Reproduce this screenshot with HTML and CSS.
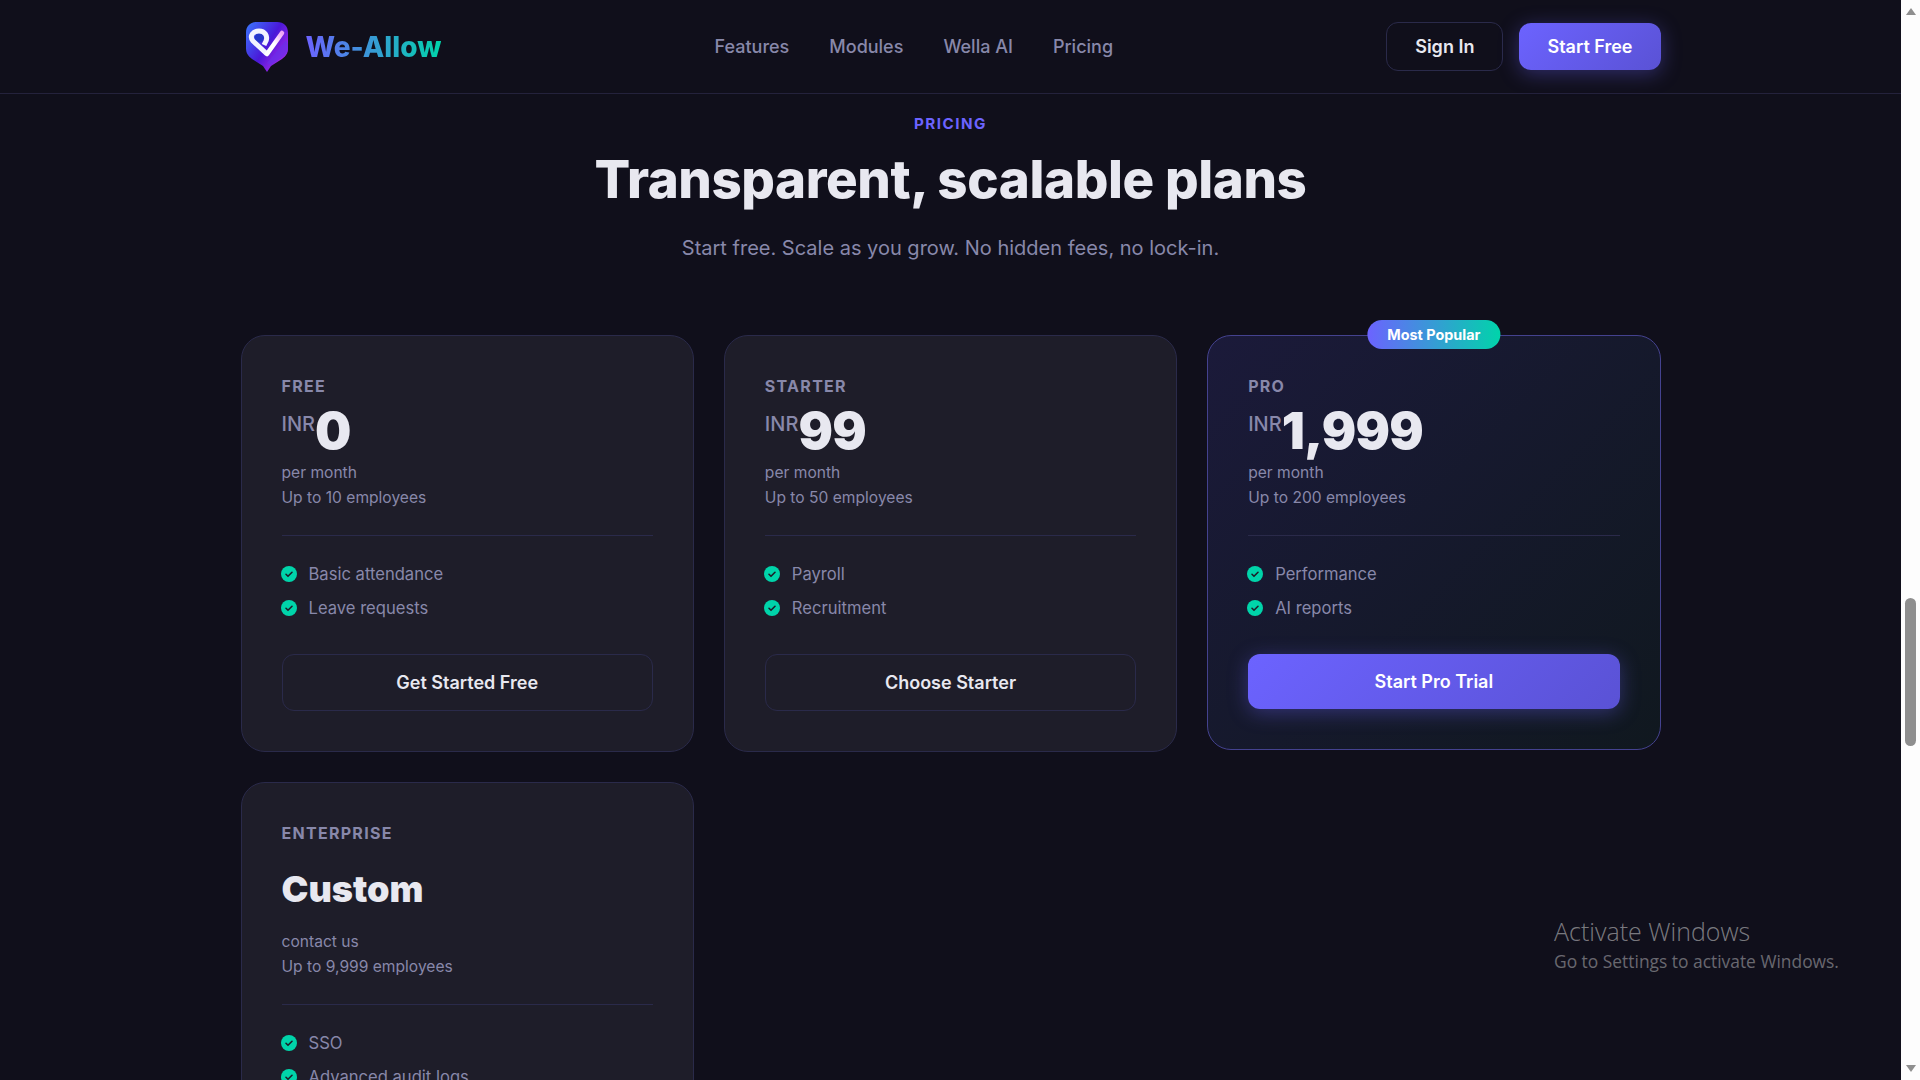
FILE: index.html
```html
<!DOCTYPE html>
<html lang="en">
<head>
    <meta charset="UTF-8">
    <meta name="viewport" content="width=device-width, initial-scale=1.0">
    <title>We-Allow - Pricing</title>
    <link rel="stylesheet" href="styles.css">
</head>
<body>
    <div class="page">
        <header class="navbar">
            <div class="nav-inner">
                <a href="#" class="brand">
                    <svg class="brand-icon" viewBox="0 0 44 52" width="44" height="52">
                        <defs>
                            <linearGradient id="shieldFill" x1="0" y1="0" x2="1" y2="0.75">
                                <stop offset="0" stop-color="#3a78ff"/>
                                <stop offset="0.55" stop-color="#4a18d8"/>
                                <stop offset="1" stop-color="#b82cec"/>
                            </linearGradient>
                            <linearGradient id="armFill" x1="0" y1="1" x2="1" y2="0">
                                <stop offset="0" stop-color="#ffffff"/>
                                <stop offset="0.5" stop-color="#ffffff"/>
                                <stop offset="1" stop-color="#f0a4f6"/>
                            </linearGradient>
                        </defs>
                        <path d="M12 1H32C39 1 43 5 43 12V27C43 32 41 35 37 38L26 45L22 51L18 45L7 38C3 35 1 32 1 27V12C1 5 5 1 12 1Z" fill="url(#shieldFill)"/>
                        <path d="M22 42L41 19L43 23V27C43 31 41 34 38 36L26 44Z" fill="#6a2ee8" opacity="0.75"/>
                        <circle cx="14.3" cy="16.7" r="4.5" fill="#2438c8"/>
                        <path d="M22 33L8 20C4 15 8 10 14 10C20 10 23 15 21 20L19 24" fill="none" stroke="#f2f4ff" stroke-width="5" stroke-linejoin="round"/>
                        <path d="M22 33L37 12" fill="none" stroke="url(#armFill)" stroke-width="4.6" stroke-linecap="round"/>
                    </svg>
                    <span class="brand-name">We-Allow</span>
                </a>
                <nav class="nav-links">
                    <a href="#">Features</a>
                    <a href="#">Modules</a>
                    <a href="#">Wella AI</a>
                    <a href="#">Pricing</a>
                </nav>
                <div class="nav-actions">
                    <button class="btn-ghost nav-btn">Sign In</button>
                    <button class="btn-primary nav-btn">Start Free</button>
                </div>
            </div>
        </header>

        <section class="pricing">
            <div class="section-head">
                <div class="section-tag">PRICING</div>
                <h2 class="section-title">Transparent, scalable plans</h2>
                <p class="section-sub">Start free. Scale as you grow. No hidden fees, no lock-in.</p>
            </div>

            <div class="plans">
                <div class="plan">
                    <div class="plan-name">FREE</div>
                    <div class="plan-price"><span class="currency">INR</span>0</div>
                    <div class="plan-note">per month<br>Up to 10 employees</div>
                    <ul class="plan-features">
                        <li><svg class="check" viewBox="0 0 16 16"><circle cx="8" cy="8" r="8"/><path d="M5 8.3l2 2 4-4"/></svg>Basic attendance</li>
                        <li><svg class="check" viewBox="0 0 16 16"><circle cx="8" cy="8" r="8"/><path d="M5 8.3l2 2 4-4"/></svg>Leave requests</li>
                    </ul>
                    <button class="btn-ghost plan-btn">Get Started Free</button>
                </div>

                <div class="plan">
                    <div class="plan-name">STARTER</div>
                    <div class="plan-price"><span class="currency">INR</span>99</div>
                    <div class="plan-note">per month<br>Up to 50 employees</div>
                    <ul class="plan-features">
                        <li><svg class="check" viewBox="0 0 16 16"><circle cx="8" cy="8" r="8"/><path d="M5 8.3l2 2 4-4"/></svg>Payroll</li>
                        <li><svg class="check" viewBox="0 0 16 16"><circle cx="8" cy="8" r="8"/><path d="M5 8.3l2 2 4-4"/></svg>Recruitment</li>
                    </ul>
                    <button class="btn-ghost plan-btn">Choose Starter</button>
                </div>

                <div class="plan plan-pro">
                    <div class="plan-badge">Most Popular</div>
                    <div class="plan-name">PRO</div>
                    <div class="plan-price"><span class="currency">INR</span>1,999</div>
                    <div class="plan-note">per month<br>Up to 200 employees</div>
                    <ul class="plan-features">
                        <li><svg class="check" viewBox="0 0 16 16"><circle cx="8" cy="8" r="8"/><path d="M5 8.3l2 2 4-4"/></svg>Performance</li>
                        <li><svg class="check" viewBox="0 0 16 16"><circle cx="8" cy="8" r="8"/><path d="M5 8.3l2 2 4-4"/></svg>AI reports</li>
                    </ul>
                    <button class="btn-primary plan-btn">Start Pro Trial</button>
                </div>

                <div class="plan">
                    <div class="plan-name">ENTERPRISE</div>
                    <div class="plan-price plan-custom">Custom</div>
                    <div class="plan-note">contact us<br>Up to 9,999 employees</div>
                    <ul class="plan-features">
                        <li><svg class="check" viewBox="0 0 16 16"><circle cx="8" cy="8" r="8"/><path d="M5 8.3l2 2 4-4"/></svg>SSO</li>
                        <li><svg class="check" viewBox="0 0 16 16"><circle cx="8" cy="8" r="8"/><path d="M5 8.3l2 2 4-4"/></svg>Advanced audit logs</li>
                    </ul>
                </div>
            </div>
        </section>

        <!-- Windows watermark sits over the page -->
        <div class="watermark">
            <div class="watermark-title">Activate Windows</div>
            <div class="watermark-sub">Go to Settings to activate Windows.</div>
        </div>
    </div>

    <div class="scrollbar">
        <div class="arrow-up"></div>
        <div class="thumb"></div>
        <div class="arrow-down"></div>
    </div>
</body>
</html>
```

FILE: styles.css
```css
* {
    box-sizing: border-box;
    margin: 0;
    padding: 0;
    font-family: 'Inter', sans-serif;
}

body {
    display: flex;
    height: 100vh;
    overflow: hidden;
    background-color: #100f1b;
    color: #e8e8f0;
}

.page {
    position: relative;
    flex: 1;
    min-width: 0;
    overflow: hidden;
}

/* Navbar */
.navbar {
    height: 94px;
    border-bottom: 1px solid #24223c;
}

.nav-inner {
    display: flex;
    align-items: center;
    justify-content: space-between;
    width: 1420px;
    height: 93px;
    margin: 0 auto;
}

.brand {
    display: flex;
    align-items: center;
    gap: 17px;
    padding-left: 4px;
    text-decoration: none;
}

.brand-icon {
    display: block;
}

.brand-name {
    font-size: 28px;
    font-weight: 800;
    background: linear-gradient(90deg, #6c63ff, #00d4aa);
    -webkit-background-clip: text;
    background-clip: text;
    color: transparent;
}

.nav-links {
    display: flex;
    gap: 40px;
}

.nav-links a {
    font-size: 18px;
    font-weight: 500;
    color: #8888aa;
    text-decoration: none;
}

.nav-actions {
    display: flex;
    align-items: center;
    gap: 16px;
}

.btn-ghost {
    background: transparent;
    border: 1px solid #2a2a4a;
    border-radius: 12px;
    color: #e8e8f0;
    font-weight: 600;
    cursor: pointer;
}

.btn-primary {
    background: linear-gradient(135deg, #6c63ff, #5a52d5);
    border: none;
    border-radius: 12px;
    color: #fff;
    font-weight: 600;
    box-shadow: 0 4px 20px rgba(108, 99, 255, 0.35);
    cursor: pointer;
}

.nav-btn {
    padding: 0 28px;
    font-size: 18px;
}

.nav-btn.btn-ghost {
    height: 49px;
}

.nav-btn.btn-primary {
    height: 47px;
}

/* Section heading */
.pricing {
    width: 1420px;
    margin: 0 auto;
}

.section-head {
    padding-top: 20px;
    margin-bottom: 75px;
    text-align: center;
}

.section-tag {
    font-size: 15.2px;
    font-weight: 700;
    letter-spacing: 1.5px;
    color: #6c63ff;
}

.section-title {
    margin-top: 15px;
    font-size: 52.8px;
    font-weight: 800;
    line-height: 1.2;
    letter-spacing: -0.4px;
    color: #e8e8f0;
}

.section-sub {
    margin-top: 25px;
    font-size: 20px;
    color: #8888aa;
}

/* Plan cards */
.plans {
    display: grid;
    grid-template-columns: repeat(3, 1fr);
    gap: 30px;
    align-items: start;
}

.plan {
    position: relative;
    padding: 41px 40px 40px;
    background: #1e1d29;
    border: 1px solid #2a2a4a;
    border-radius: 24px;
}

.plan-pro {
    background: linear-gradient(135deg, #1b1a3a, #10181f);
    border-color: #44428f;
}

.plan-badge {
    position: absolute;
    top: -16px;
    left: 50%;
    transform: translateX(-50%);
    padding: 6px 20px;
    border-radius: 100px;
    background: linear-gradient(90deg, #6c63ff, #00d4aa);
    color: #fff;
    font-size: 14.4px;
    font-weight: 700;
    line-height: 17px;
    white-space: nowrap;
}

.plan-name {
    font-size: 16px;
    font-weight: 700;
    line-height: 18px;
    letter-spacing: 1.28px;
    color: #8888aa;
}

.plan-price {
    display: flex;
    align-items: flex-start;
    margin-top: 6px;
    font-size: 51.2px;
    font-weight: 900;
    line-height: 59px;
    letter-spacing: -0.7px;
    color: #e8e8f0;
}

.currency {
    margin-top: 11px;
    font-size: 20px;
    font-weight: 500;
    line-height: 24px;
    letter-spacing: 0;
    color: #8888aa;
}

.plan-custom {
    margin-top: 22px;
    margin-bottom: 15px;
    font-size: 36px;
    line-height: 50px;
    letter-spacing: 0;
}

.plan-note {
    font-size: 15.6px;
    line-height: 25px;
    color: #8888aa;
}

.plan-features {
    margin-top: 25px;
    padding-top: 21px;
    border-top: 1px solid #2a2a4a;
    list-style: none;
}

.plan-features li {
    display: flex;
    align-items: center;
    gap: 12px;
    height: 34px;
    font-size: 16.6px;
    color: #8888aa;
}

.check {
    flex: none;
    width: 16px;
    height: 16px;
    margin-left: -1px;
}

.check circle {
    fill: #00d4aa;
}

.check path {
    fill: none;
    stroke: #1e1d29;
    stroke-width: 1.6;
    stroke-linecap: round;
    stroke-linejoin: round;
}

.plan-btn {
    display: block;
    width: 100%;
    margin-top: 29px;
    font-size: 18px;
}

.plan-btn.btn-ghost {
    height: 57px;
}

.plan-btn.btn-primary {
    height: 55px;
}

/* Windows watermark */
.watermark {
    position: absolute;
    left: 1554px;
    top: 915px;
    white-space: nowrap;
}

.watermark-title {
    font-family: 'Open Sans', sans-serif;
    font-size: 25px;
    font-weight: 300;
    line-height: 32px;
    color: rgba(255, 255, 255, 0.45);
}

.watermark-sub {
    font-family: 'Open Sans', sans-serif;
    font-size: 17.4px;
    font-weight: 400;
    line-height: 28px;
    color: rgba(255, 255, 255, 0.38);
}

/* Fake browser scrollbar */
.scrollbar {
    flex: none;
    display: flex;
    flex-direction: column;
    align-items: center;
    width: 19px;
    height: 100vh;
    background: #fdfdfd;
}

.arrow-up {
    margin-top: 8px;
    border-left: 5px solid transparent;
    border-right: 5px solid transparent;
    border-bottom: 7px solid #8f8f8f;
}

.thumb {
    width: 11px;
    height: 148px;
    margin-top: 583px;
    border-radius: 6px;
    background: #8f8f8f;
}

.arrow-down {
    margin-top: 319px;
    border-left: 5px solid transparent;
    border-right: 5px solid transparent;
    border-top: 7px solid #8f8f8f;
}
```
